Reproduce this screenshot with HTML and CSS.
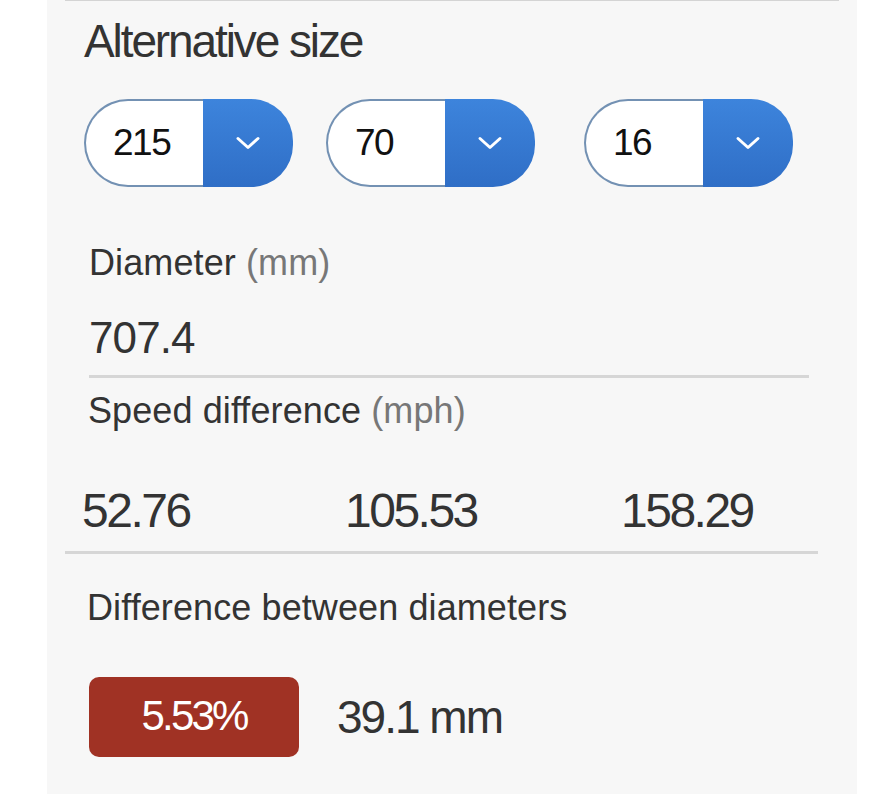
FILE: index.html
```html
<!DOCTYPE html>
<html>
<head>
<meta http-equiv="Content-Type" content="text/html; charset=utf-8"/>
<title>Alternative size</title>
<link rel="stylesheet" href="styles.css">
</head>
<body>
<div class="panel">
  <div class="section">
    <h2 class="section-title">Alternative size</h2>

    <div class="size-row">
      <div class="size-select">
        <span class="size-value">215</span>
        <span class="size-btn"><svg width="26" height="14" viewBox="0 0 26 14"><polyline points="3,2.5 13,11.5 23,2.5"/></svg></span>
      </div>
      <div class="size-select">
        <span class="size-value">70</span>
        <span class="size-btn"><svg width="26" height="14" viewBox="0 0 26 14"><polyline points="3,2.5 13,11.5 23,2.5"/></svg></span>
      </div>
      <div class="size-select">
        <span class="size-value">16</span>
        <span class="size-btn"><svg width="26" height="14" viewBox="0 0 26 14"><polyline points="3,2.5 13,11.5 23,2.5"/></svg></span>
      </div>
    </div>

    <div class="result result-diameter">
      <div class="result-label">Diameter <span class="unit">(mm)</span></div>
      <div class="result-value">707.4</div>
    </div>

    <div class="result result-speed">
      <div class="result-label">Speed difference <span class="unit">(mph)</span></div>
      <div class="speed-row">
        <span>52.76</span>
        <span>105.53</span>
        <span>158.29</span>
      </div>
    </div>

    <div class="result result-diff">
      <div class="result-label">Difference between diameters</div>
      <div class="diff-row">
        <span class="diff-badge">5.53%</span>
        <span class="diff-mm">39.1 mm</span>
      </div>
    </div>
  </div>
</div>
</body>
</html>
```

FILE: styles.css
```css
body {
  margin: 0;
  background-color: white;
  font-family: "Liberation Sans", Arial, sans-serif;
  color: #333;
}

.panel {
  margin-left: 47px;
  width: 810px;
  min-height: 794px;
  padding: 0 18px;
  box-sizing: border-box;
  background-color: #f7f7f7;
}

.section {
  border-top: 1px solid #d4d4d4;
}

.section-title {
  margin: 14px 0 0 19px;
  font-size: 46px;
  line-height: 52px;
  font-weight: normal;
  letter-spacing: -2.1px;
  color: #333;
}

/* tyre size selects */
.size-row {
  display: grid;
  grid-template-columns: 242px 258px auto;
  margin-top: 32px;
  padding-left: 19px;
}

.size-select {
  display: flex;
  width: 209px;
  height: 88px;
}

.size-value {
  width: 119px;
  box-sizing: border-box;
  padding-left: 27px;
  background-color: white;
  border: 2px solid #7391b3;
  border-right: none;
  border-radius: 44px 0 0 44px;
  font-size: 37px;
  line-height: 84px;
  letter-spacing: -1.5px;
  color: #111;
}

.size-btn {
  flex: 1;
  display: flex;
  align-items: center;
  justify-content: center;
  background: linear-gradient(#3d84dc, #2f6ec6);
  border-radius: 0 42px 42px 0;
}

.size-btn svg polyline {
  fill: none;
  stroke: white;
  stroke-width: 3;
  stroke-linecap: round;
  stroke-linejoin: round;
}

/* results */
.result-label {
  font-size: 36px;
  line-height: 42px;
  letter-spacing: 0.1px;
  color: #333;
}

.unit {
  color: #777;
}

.result-diameter {
  margin: 55px 30px 0 24px;
  padding-bottom: 12px;
  border-bottom: 3px solid #d6d6d6;
}

.result-value {
  margin-top: 29px;
  font-size: 44px;
  line-height: 50px;
  letter-spacing: -0.9px;
}

.result-speed {
  margin: 12px 21px 0 0;
  padding-bottom: 14px;
  border-bottom: 3px solid #d6d6d6;
}

.result-speed .result-label {
  padding-left: 23px;
}

.speed-row {
  display: grid;
  grid-template-columns: 263px 276px auto;
  margin-top: 53px;
  padding-left: 17px;
  font-size: 48px;
  line-height: 52px;
  letter-spacing: -2.5px;
}

.result-diff {
  margin-top: 33px;
}

.result-diff .result-label {
  padding-left: 22px;
}

.diff-row {
  display: flex;
  align-items: center;
  gap: 38px;
  margin-top: 48px;
  padding-left: 24px;
}

.diff-badge {
  width: 210px;
  height: 80px;
  border-radius: 10px;
  background-color: #a03224;
  color: white;
  text-align: center;
  font-size: 42px;
  line-height: 78px;
  letter-spacing: -2.8px;
}

.diff-mm {
  font-size: 46px;
  line-height: 80px;
  letter-spacing: -2px;
}
```
